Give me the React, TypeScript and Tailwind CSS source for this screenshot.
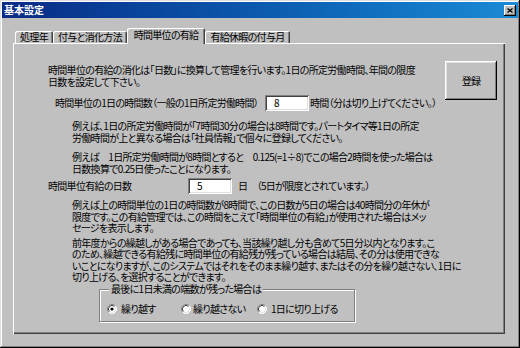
import React from "react";

const F = "[font-family:'Noto_Sans_CJK_JP','Noto_Sans_CJK_SC',sans-serif] [font-feature-settings:'palt'] tracking-[-0.7px]";

function Radio({ checked }: { checked?: boolean }) {
  return (
    <svg width="10" height="10" viewBox="0 0 10 10" className="shrink-0">
      <circle cx="5" cy="5" r="4.5" fill="#fff" />
      <path d="M1.8 8.2 A4.5 4.5 0 0 1 8.2 1.8" stroke="#808080" strokeWidth="1" fill="none" />
      <path d="M8.2 1.8 A4.5 4.5 0 0 1 1.8 8.2" stroke="#fff" strokeWidth="1" fill="none" />
      <path d="M2.5 7.5 A3.5 3.5 0 0 1 7.5 2.5" stroke="#404040" strokeWidth="1" fill="none" />
      <path d="M7.5 2.5 A3.5 3.5 0 0 1 2.5 7.5" stroke="#dfdfdf" strokeWidth="1" fill="none" />
      {checked && <circle cx="5" cy="5" r="1.6" fill="#000" />}
    </svg>
  );
}

function Input({ value }: { value: string }) {
  return (
    <div className="w-[44px] h-[16px] bg-white shadow-[inset_1px_1px_#808080,inset_-1px_-1px_#fff,inset_2px_2px_#404040,inset_-2px_-2px_#dfdfdf] pl-[9px] flex items-center text-[10px] leading-none text-black shrink-0">
      {value}
    </div>
  );
}

function Tab({ label, w, selected }: { label: string; w: string; selected?: boolean }) {
  if (selected) {
    return (
      <div
        className={`${w} h-[16px] -mb-[1px] relative z-10 bg-[#c0c0c0] rounded-t-[2px] shadow-[inset_1px_1px_#fff,inset_-1px_0_#404040,inset_-2px_0_#808080] flex items-center justify-center pb-[3px] text-[10px] leading-none text-black whitespace-nowrap`}
      >
        {label}
      </div>
    );
  }
  return (
    <div
      className={`${w} h-[12px] bg-[#c0c0c0] rounded-t-[2px] shadow-[inset_1px_1px_#fff,inset_-1px_0_#404040,inset_-2px_0_#808080] flex items-center justify-center text-[10px] leading-none text-black whitespace-nowrap`}
    >
      {label}
    </div>
  );
}

function Lines({ lines, className }: { lines: string[]; className?: string }) {
  return (
    <div className={`text-[10px] leading-[11.5px] text-black whitespace-nowrap ${className ?? ""}`}>
      {lines.map((l, i) => (
        <div key={i} className="h-[11.5px]">{l}</div>
      ))}
    </div>
  );
}

export default function App() {
  return (
    <div className={`w-[520px] h-[348px] bg-[#c0c0c0] p-[2px] shadow-[inset_-1px_-1px_#000,inset_1px_1px_#dfdfdf,inset_-2px_-2px_#808080,inset_2px_2px_#fff] ${F} overflow-hidden`}>
      {/* Title bar */}
      <div className="h-[16px] w-[516px] bg-linear-to-r from-[#0a2a86] to-[#1a8ad6] flex items-center pl-[2px] pr-[2px]">
        <span className="text-white font-bold text-[10px] leading-none tracking-normal">基本設定</span>
        <div className="ml-auto w-[12px] h-[11px] bg-[#c0c0c0] shadow-[inset_-1px_-1px_#000,inset_1px_1px_#fff,inset_-2px_-2px_#808080] flex items-center justify-center">
          <svg width="6" height="5" viewBox="0 0 6 5">
            <path d="M0.5 0.5 L5.5 4.5 M5.5 0.5 L0.5 4.5" stroke="#000" strokeWidth="1.3" />
          </svg>
        </div>
      </div>

      {/* Tabs + panel */}
      <div className="ml-[11px] mt-[10px]">
        <div className="flex items-end h-[15px] pl-[2px]">
          <Tab label="処理年" w="w-[38px]" />
          <Tab label="付与と消化方法" w="w-[74px]" />
          <Tab label="時間単位の有給" w="w-[78px]" selected />
          <Tab label="有給休暇の付与月" w="w-[85px]" />
        </div>
        <div className="w-[492px] h-[291px] shadow-[inset_1px_1px_#fff,inset_-1px_-1px_#404040,inset_-2px_-2px_#808080] pl-[35px] pt-[18px]">
          {/* Top block */}
          <div className="flex items-start">
            <div className="w-[397px] shrink-0">
              <Lines
                className="mt-[3px]"
                lines={[
                  "時間単位の有給の消化は「日数」に換算して管理を行います。1日の所定労働時間、年間の限度",
                  "日数を設定して下さい。",
                ]}
              />
              <div className="mt-[8px] flex items-center h-[16px] text-[10px] leading-none text-black whitespace-nowrap">
                <div className="w-[217px] pl-[7px] shrink-0">時間単位の1日の時間数（一般の1日所定労働時間）</div>
                <Input value="8" />
                <div className="ml-[1px]">時間（分は切り上げてください。）</div>
              </div>
            </div>
            <div className="w-[52px] h-[39px] bg-[#c0c0c0] shadow-[inset_-1px_-1px_#000,inset_1px_1px_#fff,inset_-2px_-2px_#808080,inset_2px_2px_#dfdfdf] flex items-center justify-center text-[10px] text-black">
              登録
            </div>
          </div>

          <Lines
            className="mt-[9px] ml-[24px]"
            lines={[
              "例えば、1日の所定労働時間が「7時間30分の場合は8時間です。パートタイマ等1日の所定",
              "労働時間が上と異なる場合は「社員情報」で個々に登録してください。",
            ]}
          />
          <Lines
            className="mt-[8px] ml-[24px]"
            lines={[
              "例えば　1日所定労働時間が8時間とすると　0.125(=1÷8)でこの場合2時間を使った場合は",
              "日数換算で0.25日使ったことになります。",
            ]}
          />

          <div className="mt-[4px] flex items-center h-[16px] text-[10px] leading-none text-black whitespace-nowrap">
            <div className="w-[140px] shrink-0">時間単位有給の日数</div>
            <Input value="5" />
            <div className="ml-[6px]">日　（5日が限度とされています。）</div>
          </div>

          <Lines
            className="mt-[5px] ml-[24px]"
            lines={[
              "例えば上の時間単位の1日の時間数が8時間で、この日数が5日の場合は40時間分の年休が",
              "限度です。この有給管理では、この時間をこえて「時間単位の有給」が使用された場合はメッ",
              "セージを表示します。",
            ]}
          />
          <Lines
            className="mt-[3px] ml-[24px]"
            lines={[
              "前年度からの繰越しがある場合であっても、当該繰り越し分も含めて5日分以内となります。こ",
              "のため、繰越できる有給残に時間単位の有給残が残っている場合は結局、その分は使用できな",
              "いことになりますが、このシステムではそれをそのまま繰り越す、またはその分を繰り越さない、1日に",
              "切り上げる、を選択することができます。",
            ]}
          />

          {/* Group box */}
          <div className="relative ml-[51px] mt-[6px] w-[256px] h-[33px] border border-[#808080] shadow-[inset_1px_1px_#fff,1px_1px_#fff]">
            <div className="absolute left-[9px] -top-[7px] px-[2px] bg-[#c0c0c0] text-[10px] leading-[12px] text-black whitespace-nowrap">
              最後に1日未満の端数が残った場合は
            </div>
            <div className="flex items-center h-[12px] mt-[13px] pl-[7px] text-[10px] leading-none text-black whitespace-nowrap">
              <div className="w-[74px] flex items-center gap-[4px]">
                <Radio checked />
                <span>繰り越す</span>
              </div>
              <div className="w-[76px] flex items-center gap-[2px]">
                <Radio />
                <span>繰り越さない</span>
              </div>
              <div className="flex items-center gap-[4px]">
                <Radio />
                <span>1日に切り上げる</span>
              </div>
            </div>
          </div>
        </div>
      </div>
    </div>
  );
}
